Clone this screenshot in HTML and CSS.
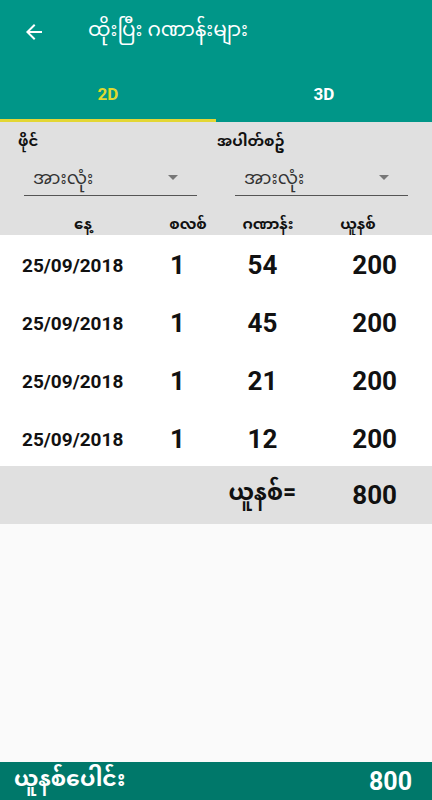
FILE: index.html
```html
<!DOCTYPE html>
<html lang="my">
<head>
<meta charset="utf-8">
<title>ထိုးပြီး ဂဏာန်းများ</title>
<link rel="stylesheet" href="styles.css">
</head>
<body>
<div class="app">
  <header class="appbar">
    <svg class="back" width="24" height="24" viewBox="0 0 24 24"><path d="M20 11H7.83l5.59-5.59L12 4l-8 8 8 8 1.41-1.41L7.83 13H20v-2z" fill="#fff"/></svg>
    <h1 class="title">ထိုးပြီး ဂဏာန်းများ</h1>
  </header>
  <nav class="tabs">
    <div class="tab active">2D</div>
    <div class="tab">3D</div>
  </nav>
  <section class="filters">
    <div class="filter">
      <div class="label">ဖိုင်</div>
      <div class="select left"><span>အားလုံး</span><i class="caret"></i></div>
    </div>
    <div class="filter">
      <div class="label">အပါတ်စဥ်</div>
      <div class="select right"><span>အားလုံး</span><i class="caret"></i></div>
    </div>
    <div class="colhead">
      <div class="hc c1">နေ့</div>
      <div class="hc c2">စလစ်</div>
      <div class="hc c3">ဂဏာန်း</div>
      <div class="hc c4">ယူနစ်</div>
    </div>
  </section>
  <section class="rows">
    <div class="row"><div class="date">25/09/2018</div><div class="slip">1</div><div class="num">54</div><div class="unit">200</div></div>
    <div class="row"><div class="date">25/09/2018</div><div class="slip">1</div><div class="num">45</div><div class="unit">200</div></div>
    <div class="row"><div class="date">25/09/2018</div><div class="slip">1</div><div class="num">21</div><div class="unit">200</div></div>
    <div class="row"><div class="date">25/09/2018</div><div class="slip">1</div><div class="num">12</div><div class="unit">200</div></div>
  </section>
  <section class="total">
    <span class="tlabel">ယူနစ်=</span>
    <span class="tval">800</span>
  </section>
  <div class="spacer"></div>
  <footer class="bottom">
    <span class="blabel">ယူနစ်ပေါင်း</span>
    <span class="bval">800</span>
  </footer>
</div>
</body>
</html>
```
FILE: styles.css
```css
* { box-sizing: border-box; margin: 0; padding: 0; }
html, body { width: 432px; height: 800px; }
body {
  background: #fafafa;
  font-family: Roboto, "Noto Sans Myanmar", "Padauk", "Myanmar Text", "Noto Sans", sans-serif;
  color: #111;
}
.app { height: 800px; display: flex; flex-direction: column; }
.appbar {
  height: 62px;
  background: #009688;
  display: flex;
  align-items: center;
  padding-left: 22px;
}
.back { flex: none; margin-top: 1px; }
.title {
  margin-left: 42px;
  color: #fff;
  font-size: 20px;
  font-weight: 400;
}
.tabs {
  height: 60px;
  background: #009688;
  display: grid;
  grid-template-columns: 1fr 1fr;
}
.tab {
  display: flex;
  align-items: center;
  justify-content: center;
  color: #fff;
  font-weight: 700;
  font-size: 17px;
  border-bottom: 3px solid transparent;
  padding-top: 6px;
}
.tab.active { color: #dfd930; border-bottom-color: #e3d634; }
.filters {
  background: #e0e0e0;
  height: 113px;
  display: grid;
  grid-template-columns: 1fr 1fr;
  grid-template-rows: 28px 50px 35px;
}
.filter { display: contents; }
.label {
  font-weight: 700;
  font-size: 15px;
  padding-top: 4px;
  padding-left: 18px;
  grid-row: 1;
}
.filter:nth-child(2) .label { padding-left: 1px; }
.select {
  grid-row: 2;
  display: flex;
  align-items: center;
  justify-content: space-between;
  border-bottom: 1px solid #555;
  height: 46px;
  padding: 14px 19px 0 9px;
  font-size: 18px;
  color: #333;
}
.select.left { margin-left: 24px; margin-right: 19px; }
.select.right { margin-left: 19px; margin-right: 24px; grid-column: 2; }
.caret {
  width: 0; height: 0;
  border-left: 5px solid transparent;
  border-right: 5px solid transparent;
  border-top: 5px solid #777;
  margin-top: -4px;
}
.colhead {
  grid-column: 1 / 3;
  display: grid;
  grid-template-columns: 166px 44px 116px 64px;
  align-items: center;
}
.hc {
  display: flex;
  justify-content: center;
  white-space: nowrap;
  font-weight: 700;
  font-size: 15px;
  padding-top: 9px;
}
.rows { background: #fff; }
.row {
  height: 57.75px;
  display: grid;
  grid-template-columns: 150px 55px 115px 1fr;
  align-items: center;
  padding-right: 35px;
  padding-top: 3px;
  font-weight: 700;
}
.date { padding-left: 22px; font-size: 19px; padding-top: 1px; }
.slip, .num { text-align: center; font-size: 26px; }
.unit { text-align: right; font-size: 26px; }
.total {
  background: #e0e0e0;
  height: 58px;
  display: flex;
  align-items: center;
  justify-content: flex-end;
  padding-right: 35px;
  gap: 56px;
  font-weight: 700;
}
.tlabel { font-size: 23px; }
.tval { font-size: 26px; }
.spacer { flex: 1; }
.bottom {
  height: 38px;
  background: #00786a;
  display: flex;
  align-items: center;
  justify-content: space-between;
  padding: 0 20px 0 14px;
  color: #fff;
  font-weight: 700;
}
.blabel { font-size: 22px; }
.bval { font-size: 25px; }
```
